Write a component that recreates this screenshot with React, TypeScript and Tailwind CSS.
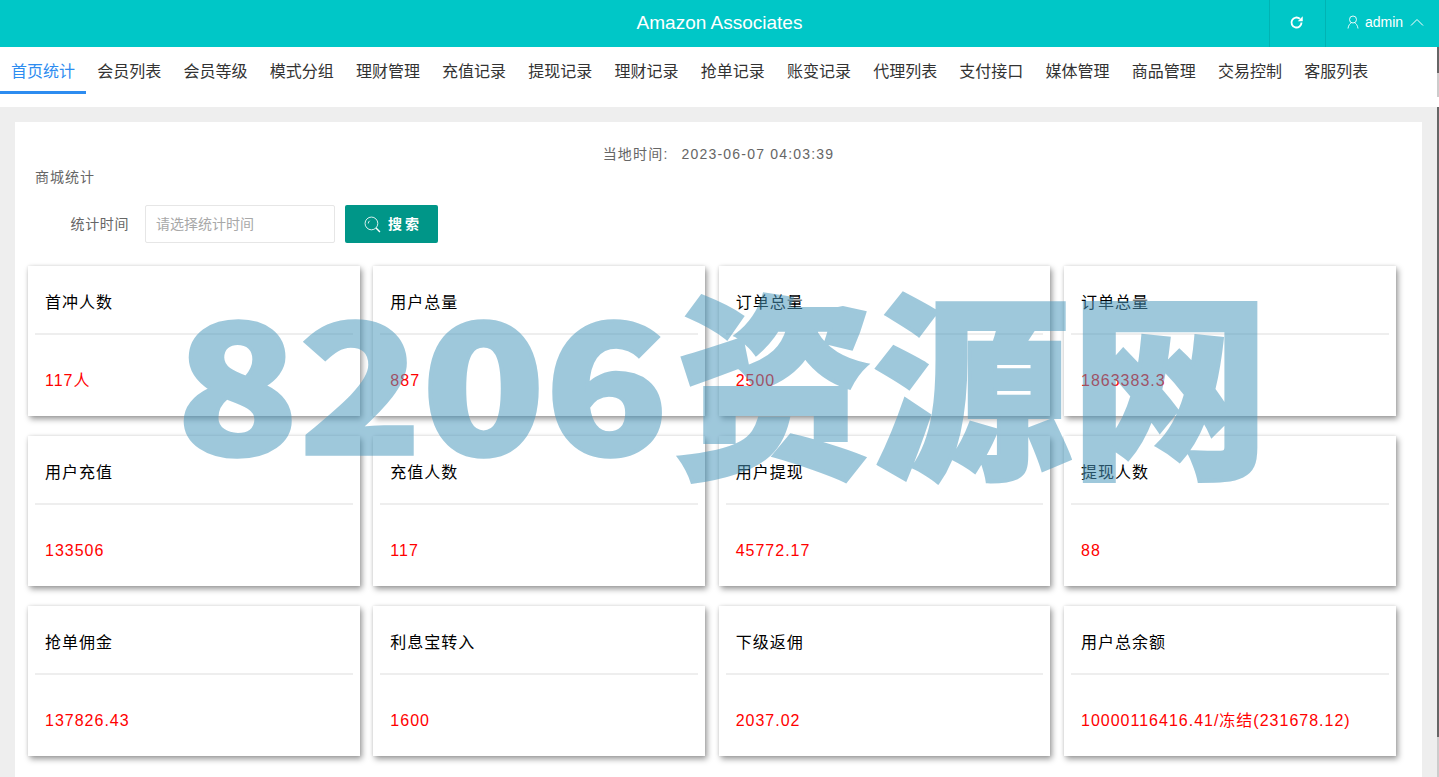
import React from "react";

const font = { fontFamily: '"Helvetica Neue", "Liberation Sans", "Noto Sans CJK SC", sans-serif' };
const tabs = ["首页统计","会员列表","会员等级","模式分组","理财管理","充值记录","提现记录","理财记录","抢单记录","账变记录","代理列表","支付接口","媒体管理","商品管理","交易控制","客服列表"];
const cards: [string, string][] = [
  ["首冲人数","117人"],["用户总量","887"],["订单总量","2500"],["订单总量","1863383.3"],
  ["用户充值","133506"],["充值人数","117"],["用户提现","45772.17"],["提现人数","88"],
  ["抢单佣金","137826.43"],["利息宝转入","1600"],["下级返佣","2037.02"],["用户总余额","10000116416.41/冻结(231678.12)"],
];

function Card({ title, value }: { title: string; value: string }) {
  return (
    <div className="h-[150px] bg-white shadow-[2px_3px_6px_rgba(0,0,0,0.4),0_0_3px_rgba(0,0,0,0.1)] flex flex-col px-[7px]">
      <div className="h-[69px] border-b-2 border-[#eeeeee] flex items-center pt-[7px] pl-[10px] pr-[9px] text-[16px] text-black tracking-[1px]">{title}</div>
      <div className="flex-1 flex items-center pl-[10px] pr-[9px] pt-[11px] text-[16px] text-[#ff0000] tracking-[1px] leading-none">{value}</div>
    </div>
  );
}

export default function App() {
  return (
    <div style={font} className="relative h-[777px] w-[1439px] overflow-hidden bg-[#eeeeee]">
      <header className="h-[47px] bg-[#00c7c7] flex items-center justify-end text-white relative">
        <div className="absolute inset-x-0 text-center text-[19px]">Amazon Associates</div>
        <div className="relative w-[56px] h-full border-l border-[#00b3b3] flex items-center justify-center pb-[3px] pr-[2px]">
          <svg width="15" height="15" viewBox="0 0 24 24" fill="none" stroke="currentColor" strokeWidth="3"><path d="M20 12a8 8 0 1 1-2.600-5.900" /><path d="M22 2v8h-8z" fill="currentColor" stroke="none" /></svg>
        </div>
        <div className="relative w-[114px] h-full border-l border-[#00b3b3] flex items-center pl-[21px] text-[14px] pb-[3px]">
          <svg width="12" height="14" viewBox="0 0 24 28" fill="none" stroke="currentColor" strokeWidth="1.8"><circle cx="12" cy="9" r="7" /><path d="M2 27c1-7 4-10 7-11.500M22 27c-1-7-4-10-7-11.500" /></svg>
          <span className="ml-[6px]">admin</span>
          <svg className="ml-[7px]" width="14" height="8" viewBox="0 0 14 8" fill="none" stroke="currentColor" strokeWidth="1"><path d="M1 7.500 7 1.500l6 6" /></svg>
        </div>
      </header>

      <nav className="h-[60px] bg-white flex pb-[13px] relative">
        {tabs.map((t, i) => (
          <div key={t} className={`h-[47px] px-[11.1px] flex items-center text-[16px] whitespace-nowrap border-b-[3px] pt-[6px] ${i === 0 ? "text-[#2d8cf0] border-[#2d8cf0]" : "text-[#333333] border-transparent"}`}>{t}</div>
        ))}
        <div className="absolute right-0 top-0 h-[26px] w-[2px] bg-[#666666]" />
        <div className="absolute right-0 top-[26px] h-[24px] w-[2px] bg-[#cccccc]" />
      </nav>

      <main className="mt-[15px] ml-[15px] w-[1407px] h-[700px] bg-white pt-[24px]">
        <div className="text-center text-[14px] text-[#666666] tracking-[1.2px] h-[16px] leading-[16px]">当地时间:<span className="ml-[13px]">2023-06-07 04:03:39</span></div>
        <div className="mt-[7px] ml-[20px] text-[14px] text-[#666666] tracking-[1px] h-[16px] leading-[16px]">商城统计</div>
        <div className="mt-[20px] flex items-center h-[38px]">
          <div className="w-[114px] text-right text-[14px] text-[#666666] tracking-[0.6px]">统计时间</div>
          <div className="ml-[16px] w-[190px] h-[38px] border border-[#e6e6e6] rounded-[2px] flex items-center pl-[10px] text-[14px] text-[#a8a8a8]">请选择统计时间</div>
          <div className="ml-[10px] w-[93px] h-[38px] bg-[#009688] rounded-[2px] flex items-center pl-[19px] gap-[7px] text-white text-[14px] tracking-[3px] font-bold">
            <svg width="17" height="17" viewBox="0 0 24 24" fill="none" stroke="currentColor" strokeWidth="1.2"><circle cx="10.500" cy="10.500" r="9" /><path d="M17 17l5.500 5.500" strokeWidth="2" /><path d="M6 10.500a4.500 4.500 0 0 1 2-3.700" /></svg>
            <span>搜索</span>
          </div>
        </div>
        <div className="mt-[23px] ml-[13px] w-[1367.5px] grid grid-cols-4 gap-x-[13.83px] gap-y-[20px]">
          {cards.map(([t, v], i) => <Card key={i} title={t} value={v} />)}
        </div>
      </main>

      <div className="absolute right-0 top-[107px] h-[630px] w-[2px] bg-[#666666]" />
      <div className="absolute right-0 top-[737px] h-[40px] w-[2px] bg-[#cccccc]" />

      <div className="absolute left-[176px] top-[241px] flex items-start text-[#4a98bd] opacity-[0.53] whitespace-nowrap pointer-events-none leading-[260px] font-black [-webkit-text-stroke:4px_#4a98bd]" style={{ fontFamily: '"Noto Sans CJK SC", sans-serif' }}>
        <span className="text-[202px] scale-y-[0.89] origin-[50%_218px] -mt-[5px]">8206</span>
        <span className="text-[198px] ml-[7px] mt-[5px]">资源网</span>
      </div>
    </div>
  );
}
